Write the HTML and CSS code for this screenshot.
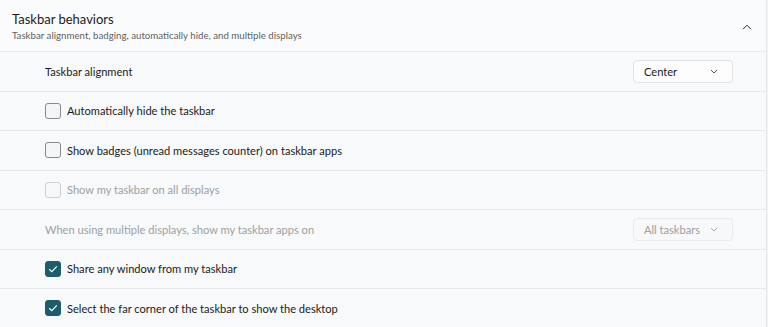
FILE: index.html
```html
<!DOCTYPE html>
<html lang="en">
<head>
    <meta charset="UTF-8">
    <title>Taskbar behaviors</title>
    <link rel="stylesheet" href="styles.css">
</head>
<body>
    <div class="panel">
        <div class="panel-header">
            <div class="header-text">
                <div class="title">Taskbar behaviors</div>
                <div class="subtitle">Taskbar alignment, badging, automatically hide, and multiple displays</div>
            </div>
            <svg class="chevron-up" width="10" height="6" viewBox="0 0 10 6"><path d="M1 5.2 L5 1.2 L9 5.2" fill="none" stroke="#333" stroke-width="1"/></svg>
        </div>

        <div class="row">
            <span class="label">Taskbar alignment</span>
            <div class="select">
                <span>Center</span>
                <svg width="8" height="5" viewBox="0 0 8 5"><path d="M1 1 L4 4 L7 1" fill="none" stroke="#555" stroke-width="1"/></svg>
            </div>
        </div>

        <div class="row">
            <label class="check"><span class="box"></span>Automatically hide the taskbar</label>
        </div>

        <div class="row">
            <label class="check"><span class="box"></span>Show badges (unread messages counter) on taskbar apps</label>
        </div>

        <div class="row disabled">
            <label class="check"><span class="box"></span>Show my taskbar on all displays</label>
        </div>

        <div class="row disabled">
            <span class="label">When using multiple displays, show my taskbar apps on</span>
            <div class="select">
                <span>All taskbars</span>
                <svg width="8" height="5" viewBox="0 0 8 5"><path d="M1 1 L4 4 L7 1" fill="none" stroke="#aaa" stroke-width="1"/></svg>
            </div>
        </div>

        <div class="row">
            <label class="check"><span class="box checked"><svg width="10" height="8" viewBox="0 0 10 8"><path d="M1.2 4.2 L3.8 6.6 L8.8 1.4" fill="none" stroke="#fff" stroke-width="1.2"/></svg></span>Share any window from my taskbar</label>
        </div>

        <div class="row">
            <label class="check"><span class="box checked"><svg width="10" height="8" viewBox="0 0 10 8"><path d="M1.2 4.2 L3.8 6.6 L8.8 1.4" fill="none" stroke="#fff" stroke-width="1.2"/></svg></span>Select the far corner of the taskbar to show the desktop</label>
        </div>
    </div>
</body>
</html>
```

FILE: styles.css
```css
body {
    margin: 0;
    background-color: #f3f5f7;
    font-family: 'Lato', 'Open Sans', sans-serif;
    color: #1b1b1b;
}
.panel {
    width: 766px;
    border-right: 1px solid #e4e6e8;
    background-color: #f7f9fa;
}
.panel-header {
    height: 51px;
    display: flex;
    align-items: center;
    justify-content: space-between;
    padding: 0 14px 0 12px;
    background-color: #fafbfc;
    border-bottom: 1px solid #e8eaec;
}
.header-text {
    margin-top: 1px;
}
.title {
    font-size: 13px;
    line-height: 17px;
}
.subtitle {
    font-size: 9.7px;
    line-height: 14px;
    color: #5f5f5f;
}
.chevron-up {
    margin-top: 2px;
}
.row {
    height: 38.5px;
    display: flex;
    align-items: center;
    justify-content: space-between;
    padding: 0 33px 0 45px;
    border-bottom: 1px solid #e6e9eb;
    font-size: 11.1px;
}
.row:last-child {
    border-bottom: none;
}
.check {
    display: flex;
    align-items: center;
    gap: 6px;
}
.box {
    width: 14px;
    height: 14px;
    border: 1px solid #8a8a8a;
    border-radius: 3px;
    background-color: #f4f5f6;
    display: flex;
    align-items: center;
    justify-content: center;
}
.box.checked {
    border-color: #1b5d6b;
    background-color: #1b5d6b;
}
.select {
    width: 78px;
    height: 21px;
    padding: 0 10px;
    display: flex;
    align-items: center;
    justify-content: space-between;
    background-color: #fdfdfd;
    border: 1px solid #e3e3e3;
    border-radius: 4px;
    font-size: 11.1px;
}
.select svg {
    margin-right: 4px;
}
.disabled {
    color: #a0a0a0;
}
.disabled .box {
    border-color: #cfcfcf;
    background-color: #f7f8f9;
}
.disabled .select {
    background-color: #f6f8f9;
    border-color: #eaeaea;
}
```
